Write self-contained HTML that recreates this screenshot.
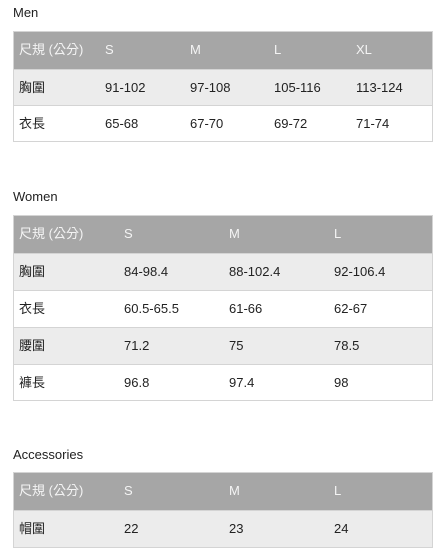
<!DOCTYPE html>
<html><head><meta charset="utf-8"><style>
body{margin:0;width:447px;height:558px;background:#fff;font-family:"Liberation Sans","Noto Sans CJK TC",sans-serif;font-size:13px;color:#222;position:relative;overflow:hidden}
.t{position:absolute;left:13px;font-size:13px;color:#222}
.tb{position:absolute;left:13px;width:420px;border:1px solid #d4d4d4;box-sizing:border-box}
.r{position:relative;height:37px;border-top:1px solid #d4d4d4;box-sizing:border-box}
.r:first-child{border-top:none}
.m .r{height:36px}.m .r:first-child{height:37px}
.h{background:#a6a6a6;color:#f4f4f4}
.g{background:#ececec}
.w{background:#fff}
.r span{position:absolute;top:0;line-height:35px}
</style></head><body>
<div class="t" style="top:5px">Men</div>
<div class="tb m" style="top:31px">
<div class="r h"><span style="left:5px">尺規 (公分)</span><span style="left:91px">S</span><span style="left:176px">M</span><span style="left:260px">L</span><span style="left:342px">XL</span></div>
<div class="r g"><span style="left:5px">胸圍</span><span style="left:91px">91-102</span><span style="left:176px">97-108</span><span style="left:260px">105-116</span><span style="left:342px">113-124</span></div>
<div class="r w"><span style="left:5px">衣長</span><span style="left:91px">65-68</span><span style="left:176px">67-70</span><span style="left:260px">69-72</span><span style="left:342px">71-74</span></div>
</div>
<div class="t" style="top:189px">Women</div>
<div class="tb" style="top:215px">
<div class="r h"><span style="left:5px">尺規 (公分)</span><span style="left:110px">S</span><span style="left:215px">M</span><span style="left:320px">L</span></div>
<div class="r g"><span style="left:5px">胸圍</span><span style="left:110px">84-98.4</span><span style="left:215px">88-102.4</span><span style="left:320px">92-106.4</span></div>
<div class="r w"><span style="left:5px">衣長</span><span style="left:110px">60.5-65.5</span><span style="left:215px">61-66</span><span style="left:320px">62-67</span></div>
<div class="r g"><span style="left:5px">腰圍</span><span style="left:110px">71.2</span><span style="left:215px">75</span><span style="left:320px">78.5</span></div>
<div class="r w" style="height:36px"><span style="left:5px">褲長</span><span style="left:110px">96.8</span><span style="left:215px">97.4</span><span style="left:320px">98</span></div>
</div>
<div class="t" style="top:447px">Accessories</div>
<div class="tb" style="top:472px">
<div class="r h"><span style="left:5px">尺規 (公分)</span><span style="left:110px">S</span><span style="left:215px">M</span><span style="left:320px">L</span></div>
<div class="r g"><span style="left:5px">帽圍</span><span style="left:110px">22</span><span style="left:215px">23</span><span style="left:320px">24</span></div>
</div>
</body></html>
